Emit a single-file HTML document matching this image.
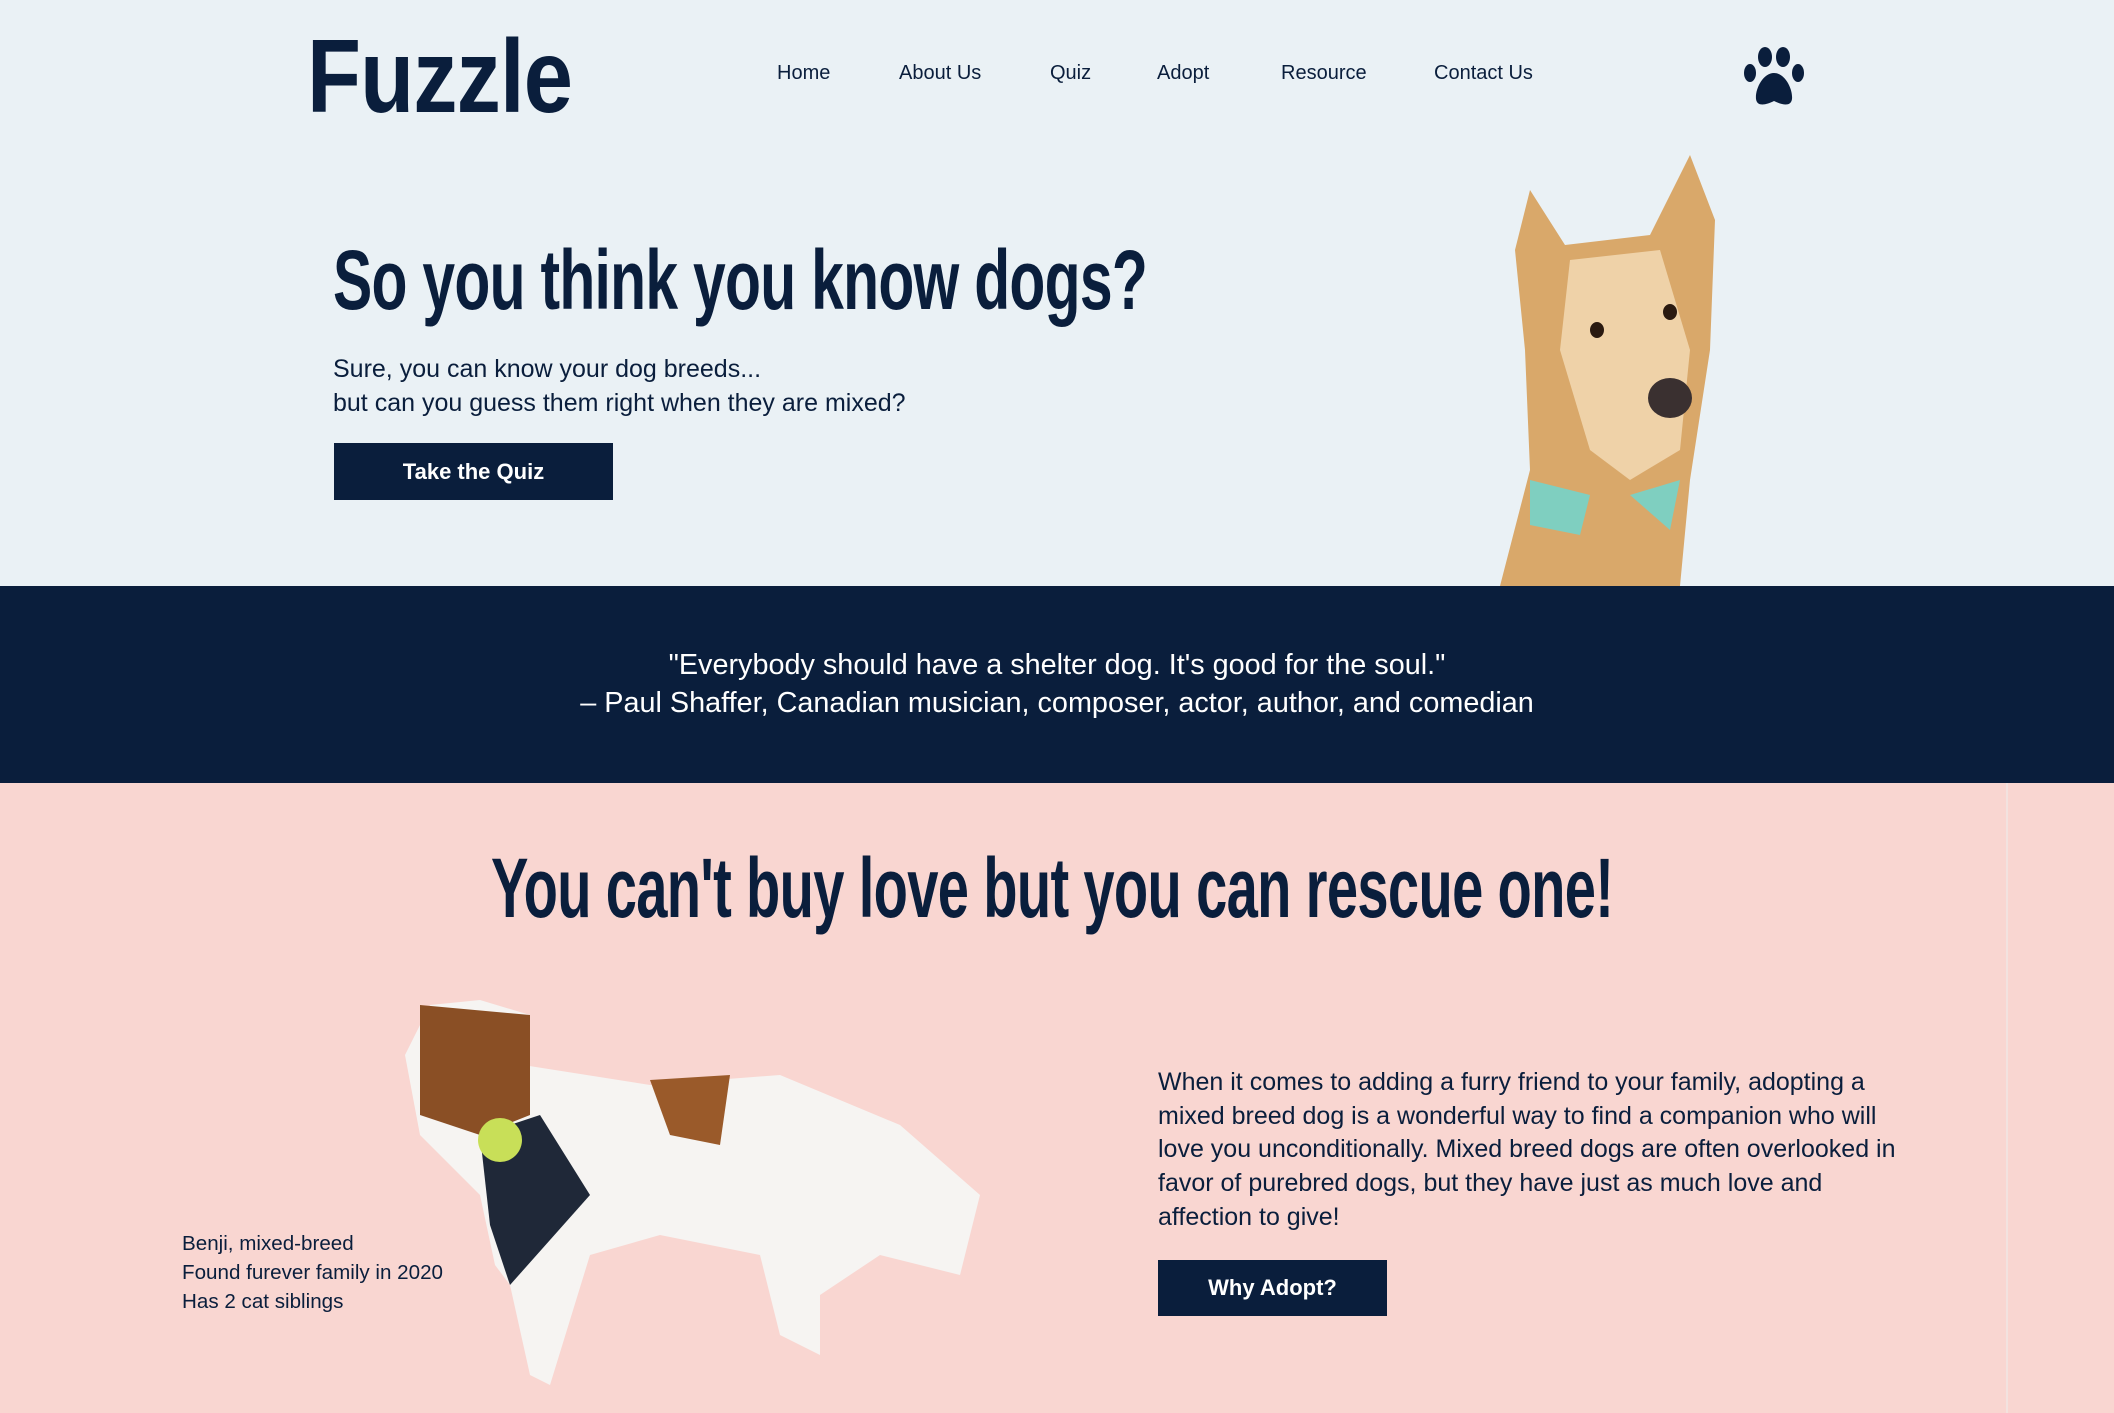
<!DOCTYPE html>
<html><head><meta charset="utf-8"><style>
*{margin:0;padding:0;box-sizing:border-box}
body{width:2114px;height:1413px;overflow:hidden;background:#eaf1f5;font-family:"Liberation Sans",sans-serif;color:#0a1e3c;position:relative}
.abs{position:absolute;white-space:nowrap}
.chunky{font-weight:900;transform-origin:left top;letter-spacing:-1px}
.nav{top:62px;font-size:20px;color:#0a1e3c}
.btn{position:absolute;background:#0a1e3c;color:#fff;font-weight:bold;display:flex;align-items:center;justify-content:center;font-size:22px}
</style></head><body>
<div class="abs chunky" style="left:307px;top:18px;font-size:104px;transform:scaleX(0.85)">Fuzzle</div>
<div class="abs nav" style="left:777px">Home</div>
<div class="abs nav" style="left:899px">About Us</div>
<div class="abs nav" style="left:1050px">Quiz</div>
<div class="abs nav" style="left:1157px">Adopt</div>
<div class="abs nav" style="left:1281px">Resource</div>
<div class="abs nav" style="left:1434px">Contact Us</div>
<svg class="abs" style="left:1743px;top:47px" width="62" height="60" viewBox="0 0 62 60" fill="#0a1e3c">
<ellipse cx="22" cy="10" rx="7" ry="10"/><ellipse cx="40" cy="10" rx="7" ry="10"/>
<ellipse cx="7" cy="26" rx="6" ry="9"/><ellipse cx="55" cy="26" rx="6" ry="9"/>
<path d="M31 26C20 26 12 42 13 52c1 8 10 6 18 2c8 4 17 6 18-2c1-10-7-26-18-26z"/></svg>

<div class="abs chunky" style="left:333px;top:232px;font-size:84px;transform:scaleX(0.70)">So you think you know dogs?</div>
<div class="abs" style="left:333px;top:352px;font-size:25px;line-height:34px">Sure, you can know your dog breeds...<br>but can you guess them right when they are mixed?</div>
<div class="btn" style="left:334px;top:443px;width:279px;height:57px">Take the Quiz</div>

<svg class="abs" style="left:1490px;top:150px" width="280" height="436" viewBox="0 0 280 436">
<path d="M40 40 L75 95 L160 85 L200 5 L225 70 L220 200 L200 330 L190 436 L10 436 L40 320 L35 200 L25 100Z" fill="#d9a86a"/>
<path d="M80 110 L170 100 L200 200 L190 300 L140 330 L100 300 L70 200Z" fill="#efd2a8"/>
<ellipse cx="180" cy="162" rx="7" ry="8" fill="#2a1a10"/><ellipse cx="107" cy="180" rx="7" ry="8" fill="#2a1a10"/>
<ellipse cx="180" cy="248" rx="22" ry="20" fill="#3a3030"/>
<path d="M40 330 L100 345 L90 385 L40 375 Z M140 345 L190 330 L180 380 Z" fill="#7fcfc0"/>
</svg>

<div style="position:absolute;left:0;top:586px;width:2114px;height:197px;background:#0a1e3c"></div>
<div class="abs" style="left:0;width:2114px;top:646px;text-align:center;color:#fff;font-size:28.8px;line-height:38px">"Everybody should have a shelter dog. It's good for the soul."<br>– Paul Shaffer, Canadian musician, composer, actor, author, and comedian</div>

<div style="position:absolute;left:0;top:783px;width:2114px;height:630px;background:#f9d6d1"></div>
<div style="position:absolute;left:2006px;top:783px;width:2px;height:630px;background:#f3e2df"></div>
<div class="abs chunky" style="left:491px;top:840px;font-size:84px;transform:scaleX(0.668)">You can't buy love but you can rescue one!</div>

<svg class="abs" style="left:400px;top:995px" width="585" height="400" viewBox="0 0 585 400">
<path d="M60 60 L250 90 L380 80 L500 130 L580 200 L560 280 L480 260 L420 300 L420 360 L380 340 L360 260 L260 240 L190 260 L150 390 L130 380 L110 290 L95 270 L80 200 L20 140 L5 60 L30 10 L80 5 L130 20Z" fill="#f6f4f2"/>
<path d="M20 10 L130 20 L130 120 L80 140 L20 120 Z" fill="#8a4f25"/>
<path d="M250 85 L330 80 L320 150 L270 140Z" fill="#9a5a2a"/>
<path d="M80 140 L140 120 L190 200 L110 290 L90 230Z" fill="#1f2838"/>
<circle cx="100" cy="145" r="22" fill="#c8df58"/>
</svg>
<div class="abs" style="left:182px;top:1229px;font-size:20.6px;line-height:29px">Benji, mixed-breed<br>Found furever family in 2020<br>Has 2 cat siblings</div>
<div class="abs" style="left:1158px;top:1066px;font-size:25px;line-height:33.7px">When it comes to adding a furry friend to your family, adopting a<br>mixed breed dog is a wonderful way to find a companion who will<br>love you unconditionally. Mixed breed dogs are often overlooked in<br>favor of purebred dogs, but they have just as much love and<br>affection to give!</div>
<div class="btn" style="left:1158px;top:1260px;width:229px;height:56px">Why Adopt?</div>
</body></html>
